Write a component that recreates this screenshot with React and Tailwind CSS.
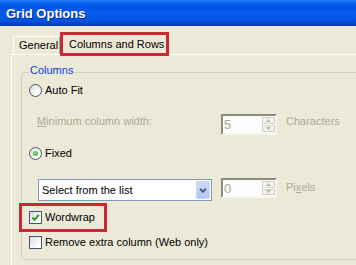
const Radio = ({ checked }) => (
  <span className="w-[13px] h-[13px] shrink-0 rounded-full border border-[#3d5775] bg-[radial-gradient(circle_at_70%_70%,#ffffff_20%,#d8d6cc)] flex items-center justify-center">
    {checked && (
      <span className="w-[5px] h-[5px] rounded-full bg-[radial-gradient(circle_at_40%_40%,#8ee07e,#1f9a1f)]" />
    )}
  </span>
);

const Check = ({ checked }) => (
  <span className="w-[13px] h-[13px] shrink-0 border border-[#3d5775] bg-[linear-gradient(135deg,#dcdcd4,#ffffff_80%)] flex items-center justify-center">
    {checked && (
      <svg width="9" height="9" viewBox="0 0 9 9">
        <path d="M1.5 4.5 L3.6 6.8 L7.8 1.8" stroke="#21a121" strokeWidth="2" fill="none" />
      </svg>
    )}
  </span>
);

const Arrow = ({ up }) => (
  <svg width="5" height="3" viewBox="0 0 5 3">
    <path d={up ? "M0 3 L2.5 0 L5 3 Z" : "M0 0 L2.5 3 L5 0 Z"} fill="#b8b5a6" />
  </svg>
);

const Spin = ({ value, h }) => (
  <div className={`w-[56px] ${h} flex border-2 border-t-[#8c8a80] border-l-[#8c8a80] border-r-[#f6f5ef] border-b-[#f6f5ef] bg-[#fcfcfa]`}>
    <span className="flex-1 self-center pl-[1px] text-[13px] leading-none text-[#aca899]">{value}</span>
    <div className="w-[13px] flex flex-col gap-[1px] py-[1px]">
      <span className="flex-1 flex items-center justify-center border border-[#d3d1c5] bg-[#f3f2ec]">
        <Arrow up />
      </span>
      <span className="flex-1 flex items-center justify-center border border-[#d3d1c5] bg-[#f3f2ec]">
        <Arrow />
      </span>
    </div>
  </div>
);

const App = () => {
  return (
    <div className="w-[356px] h-[265px] overflow-hidden bg-[#ece9d8] font-['Liberation_Sans',Arial,sans-serif] text-[11px] leading-[13px] text-black">
      {/* title bar */}
      <div className="h-[26px] flex items-center pl-[6px] bg-[linear-gradient(to_bottom,#2a7cfb_0px,#0a62f0_3px,#0055e5_7px,#0a5cec_13px,#0054e3_20px,#0048d0_23px,#0038b0_26px)] text-white font-bold text-[13px] [text-shadow:1px_1px_0_#0a2a90]">
        Grid Options
      </div>
      <div className="flex h-[239px]">
        <div className="w-[3px] bg-[linear-gradient(to_right,#0840c0,#1a68ee)]" />
        <div className="flex-1 pl-[11px] flex flex-col">
          {/* tabs */}
          <div className="h-[28px] flex items-end relative z-10">
            <div className="ml-[2px] w-[47px] h-[18px] flex items-center pl-[5px] border-l border-t border-r border-l-white border-t-white border-r-[#aca899] rounded-t-[2px]">
              General
            </div>
            <div className="w-[109px] h-[24px] -mb-[2px] flex items-center pl-[6px] border-[3px] border-[#cc2a33] bg-[#ece9d8]">
              Columns and Rows
            </div>
          </div>
          {/* panel */}
          <div className="flex-1 border-l border-t border-white pl-[9px] pt-[17px]">
            <div className="relative w-[400px] h-[188px] border border-[#d0d0bf] rounded-[3px] pl-[7px] pt-[8px]">
              <span className="absolute left-[7px] -top-[9px] px-[1px] bg-[#ece9d8] text-[#0046d5]">Columns</span>

              <div className="flex items-center h-[18px] gap-[3px]">
                <Radio />
                <span>Auto Fit</span>
              </div>

              <div className="flex items-start h-[21px] mt-[15px]">
                <span className="ml-[8px] w-[184px] mt-[1px] text-[#aca899]">
                  <span className="underline">M</span>inimum column width:
                </span>
                <Spin value="5" h="h-[21px]" />
                <span className="ml-[9px] mt-[1px] text-[#aca899]">Characters</span>
              </div>

              <div className="flex items-center h-[18px] gap-[3px] mt-[9px]">
                <Radio checked />
                <span>Fixed</span>
              </div>

              <div className="flex items-start h-[23px] mt-[16px]">
                <div className="ml-[9px] mt-[1px] w-[174px] h-[22px] flex border border-[#7f9db9] bg-white">
                  <span className="flex-1 self-center pl-[3px]">Select from the list</span>
                  <span className="w-[14px] m-[1px] flex items-center justify-center rounded-[2px] border border-[#c4d3f6] bg-[linear-gradient(to_bottom,#cddcfd,#b2c6f4)]">
                    <svg width="8" height="5" viewBox="0 0 8 5">
                      <path d="M1 0.8 L4 3.8 L7 0.8" stroke="#4d6185" strokeWidth="2" fill="none" />
                    </svg>
                  </span>
                </div>
                <div className="ml-[9px]">
                  <Spin value="0" h="h-[20px]" />
                </div>
                <span className="ml-[9px] mt-[3px] text-[#aca899]">
                  Pi<span className="underline">x</span>els
                </span>
              </div>

              <div className="w-fit -ml-[10px] mt-[2px] h-[29px] flex items-center gap-[3px] border-[3px] border-[#cc2a33] pl-[7px] pr-[9px]">
                <Check checked />
                <span>Wordwrap</span>
              </div>

              <div className="flex items-center h-[13px] gap-[3px] mt-[4px]">
                <Check />
                <span>Remove extra column (Web only)</span>
              </div>
            </div>
          </div>
        </div>
      </div>
    </div>
  );
};

export default App;
